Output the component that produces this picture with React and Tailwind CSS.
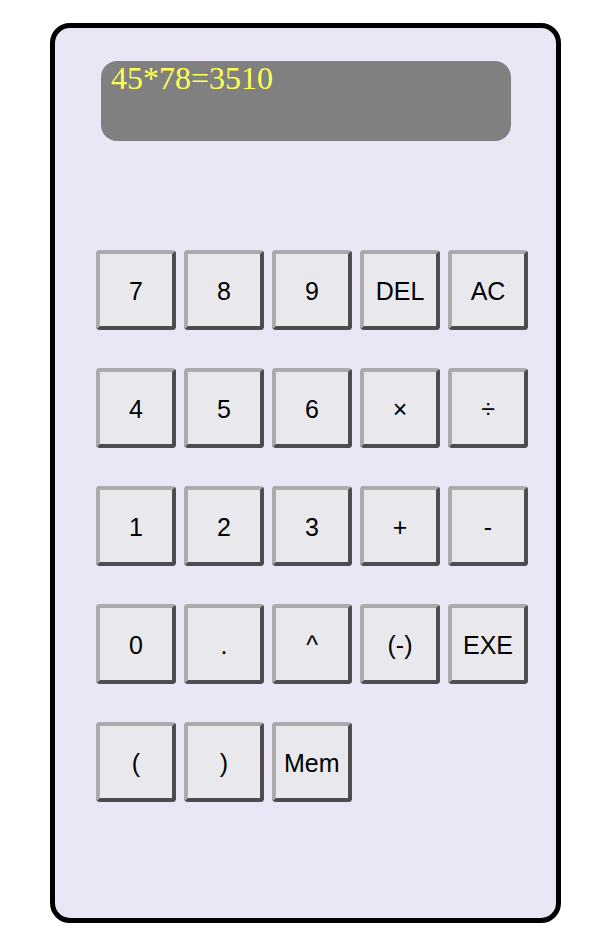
import React from "react";

const rows = [
  ["7", "8", "9", "DEL", "AC"],
  ["4", "5", "6", "×", "÷"],
  ["1", "2", "3", "+", "-"],
  ["0", ".", "^", "(-)", "EXE"],
  ["(", ")", "Mem"],
];

function Key({ label }) {
  const left = label === "Mem";
  return (
    <button
      className={`w-[80px] h-[80px] bg-[#e9e9ed] border-[4px] border-t-[#ababab] border-l-[#ababab] border-b-[#4d4d4d] border-r-[#4d4d4d] rounded-[4px] flex items-center pt-[2px] text-[25px] text-black leading-none ${left ? "justify-start pl-[8px]" : "justify-center"}`}
      style={{ fontFamily: '"Liberation Sans", Arial, sans-serif' }}
    >
      {label}
    </button>
  );
}

export default function App() {
  return (
    <div className="w-[608px] h-[950px] bg-white pt-[23px] pl-[50px]">
      <div className="w-[511px] h-[900px] border-[5px] border-black rounded-[20px] bg-[#eae6f6] flex flex-col">
        <div className="ml-[46px] mt-[33px] w-[410px] h-[80px] bg-[#808080] rounded-[16px] pl-[10px]">
          <div
            className="text-[32px] leading-[34px] text-[#ffff55]"
            style={{ fontFamily: '"Liberation Serif", "Times New Roman", serif' }}
          >
            45*78=3510
          </div>
        </div>
        <div className="ml-[41px] mt-[109px] grid grid-cols-[repeat(5,80px)] gap-x-[8px] gap-y-[38px]">
          {rows.flat().map((l, i) => (
            <Key key={i} label={l} />
          ))}
        </div>
      </div>
    </div>
  );
}
